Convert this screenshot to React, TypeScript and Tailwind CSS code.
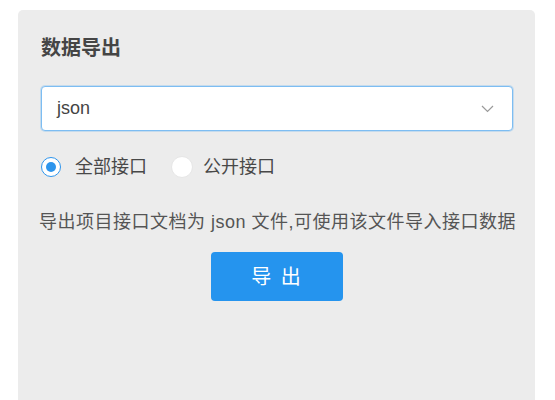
import React from "react";

export default function App() {
  return (
    <div className="w-[555px] h-[400px] bg-white overflow-hidden pt-[10px] pl-[18px]" style={{ fontFamily: '"Liberation Sans", "Noto Sans CJK SC", sans-serif' }}>
      <div className="w-[517px] h-[420px] bg-[#ececec] rounded-[5px] pl-[23px] pr-[22px] pt-[26px]">
        <div className="text-[20px] leading-[24px] font-bold text-[#454545]">数据导出</div>
        <div className="mt-[26px] h-[45px] bg-white border border-[#7dbdf2] rounded-[4px] shadow-[0_0_0_1px_rgba(125,189,242,0.35)] flex items-center justify-between pl-[15px] pr-[18px]">
          <span className="text-[18px] text-[#444]">json</span>
          <svg width="13" height="8" viewBox="0 0 13 8" fill="none">
            <path d="M1 1L6.5 6.5L12 1" stroke="#9a9a9a" strokeWidth="1.2" />
          </svg>
        </div>
        <div className="mt-[25px] flex items-center text-[18px] text-[#484848] leading-[22px]">
          <div className="flex items-center">
            <span className="w-[20px] h-[20px] rounded-full bg-white border-[1.5px] border-[#2e95ec] flex items-center justify-center">
              <span className="w-[10px] h-[10px] rounded-full bg-[#2e95ec]"></span>
            </span>
            <span className="ml-[14px]">全部接口</span>
          </div>
          <div className="flex items-center ml-[24px]">
            <span className="w-[22px] h-[22px] rounded-full bg-white border border-[#e6e6e6]"></span>
            <span className="ml-[10px]">公开接口</span>
          </div>
        </div>
        <div className="mt-[32px] -ml-[2px] text-[18px] leading-[24px] tracking-[0.5px] text-[#555] whitespace-nowrap">导出项目接口文档为 json 文件,可使用该文件导入接口数据</div>
        <div className="mt-[18px] flex justify-center">
          <button className="w-[132px] h-[49px] bg-[#2594ee] rounded-[4px] text-white text-[20px] tracking-[2px]">导 出</button>
        </div>
      </div>
    </div>
  );
}
